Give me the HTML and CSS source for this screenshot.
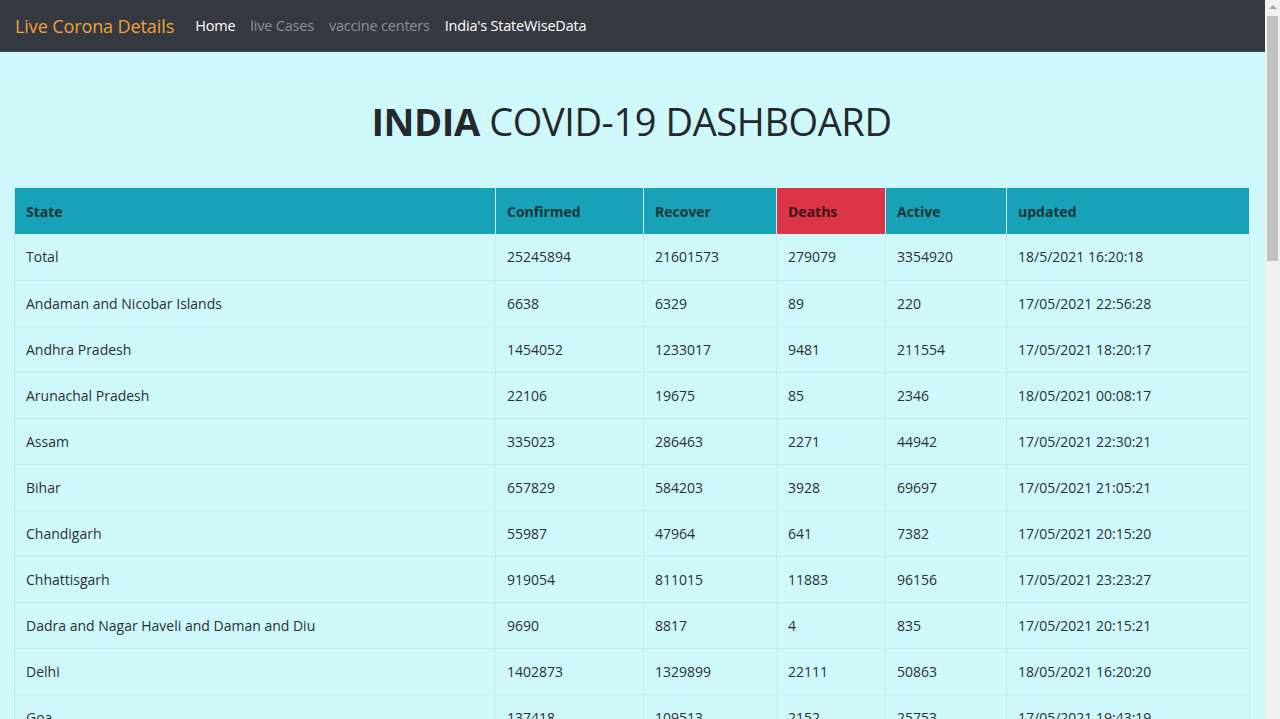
FILE: index.html
```html
<!DOCTYPE html>
<html lang="en">
<head>
<meta charset="utf-8">
<title>Live Corona Details</title>
<link rel="stylesheet" href="styles.css">
</head>
<body>
<nav class="navbar">
  <a class="brand" href="#">Live Corona Details</a>
  <ul class="nav">
    <li><a class="nav-link active" href="#">Home</a></li>
    <li><a class="nav-link muted" href="#">live Cases</a></li>
    <li><a class="nav-link muted" href="#">vaccine centers</a></li>
    <li><a class="nav-link active" href="#">India's StateWiseData</a></li>
  </ul>
</nav>
<main class="container">
  <h1 class="title"><strong>INDIA</strong> COVID-19 DASHBOARD</h1>
  <table class="data">
    <colgroup>
      <col class="c-state"><col class="c-conf"><col class="c-rec"><col class="c-death"><col class="c-act"><col class="c-upd">
    </colgroup>
    <thead>
      <tr>
        <th>State</th><th>Confirmed</th><th>Recover</th><th class="danger">Deaths</th><th>Active</th><th>updated</th>
      </tr>
    </thead>
    <tbody>
      <tr><td>Total</td><td>25245894</td><td>21601573</td><td>279079</td><td>3354920</td><td>18/5/2021 16:20:18</td></tr>
      <tr><td>Andaman and Nicobar Islands</td><td>6638</td><td>6329</td><td>89</td><td>220</td><td>17/05/2021 22:56:28</td></tr>
      <tr><td>Andhra Pradesh</td><td>1454052</td><td>1233017</td><td>9481</td><td>211554</td><td>17/05/2021 18:20:17</td></tr>
      <tr><td>Arunachal Pradesh</td><td>22106</td><td>19675</td><td>85</td><td>2346</td><td>18/05/2021 00:08:17</td></tr>
      <tr><td>Assam</td><td>335023</td><td>286463</td><td>2271</td><td>44942</td><td>17/05/2021 22:30:21</td></tr>
      <tr><td>Bihar</td><td>657829</td><td>584203</td><td>3928</td><td>69697</td><td>17/05/2021 21:05:21</td></tr>
      <tr><td>Chandigarh</td><td>55987</td><td>47964</td><td>641</td><td>7382</td><td>17/05/2021 20:15:20</td></tr>
      <tr><td>Chhattisgarh</td><td>919054</td><td>811015</td><td>11883</td><td>96156</td><td>17/05/2021 23:23:27</td></tr>
      <tr><td>Dadra and Nagar Haveli and Daman and Diu</td><td>9690</td><td>8817</td><td>4</td><td>835</td><td>17/05/2021 20:15:21</td></tr>
      <tr><td>Delhi</td><td>1402873</td><td>1329899</td><td>22111</td><td>50863</td><td>18/05/2021 16:20:20</td></tr>
      <tr><td>Goa</td><td>137418</td><td>109513</td><td>2152</td><td>25753</td><td>17/05/2021 19:43:19</td></tr>
    </tbody>
  </table>
</main>
<div class="fake-scrollbar" aria-hidden="true">
  <span class="arrow"></span>
  <span class="thumb"></span>
</div>
</body>
</html>
```
FILE: styles.css
```css
* { box-sizing: border-box; }
html, body { margin: 0; padding: 0; }
body {
  background: #cff8fb;
  color: #212529;
  font-family: "Open Sans", "Noto Sans", Arial, sans-serif;
  font-size: 14px;
  width: 1265px;
}
a { text-decoration: none; }

.navbar {
  height: 52px;
  background: #343a40;
  display: flex;
  align-items: center;
  padding: 0 15px;
  border-bottom: 1px solid #3d4a4c;
}
.brand {
  color: #f0a33a;
  font-size: 18px;
  margin-right: 21px;
  letter-spacing: -0.1px;
}
.nav {
  display: flex;
  list-style: none;
  margin: 0;
  padding: 0;
  gap: 15px;
}
.nav-link {
  font-size: 14.5px;
  color: #ffffff;
  letter-spacing: -0.2px;
}
.nav-link.muted { color: #8d9194; }

.container { padding: 0 16px 0 14px; }
.title {
  margin: 46px 0 44px;
  text-align: center;
  font-size: 38px;
  font-weight: 400;
  line-height: 46px;
  color: #23282d;
  letter-spacing: -0.4px;
}
.title strong { font-weight: 700; }

.data {
  width: 1235px;
  border-collapse: collapse;
  table-layout: fixed;
  border-left: 1px solid #bfe6ea;
}
.c-state { width: 481px; }
.c-conf { width: 148px; }
.c-rec { width: 133px; }
.c-death { width: 109px; }
.c-act { width: 121px; }
.c-upd { width: 243px; }

.data th, .data td {
  text-align: left;
  padding: 0 11px;
  white-space: nowrap;
  border-right: 1px solid #c3ebee;
}
.data th {
  background: #17a2b8;
  height: 46px;
  font-weight: 700;
  color: #17343a;
  border-right: 1px solid #c8f0f4;
}
.data th.danger { background: #dc3545; color: #3a1418; }
.data td {
  height: 46px;
  border-bottom: 1px solid #c3ebee;
  color: #2b3033;
}

.fake-scrollbar {
  position: fixed;
  top: 0;
  right: 0;
  width: 15px;
  height: 100vh;
  background: #f1f1f1;
}
.fake-scrollbar .arrow {
  position: absolute;
  top: 5px;
  left: 4px;
  width: 0;
  height: 0;
  border-left: 4px solid transparent;
  border-right: 4px solid transparent;
  border-bottom: 4px solid #a3a3a3;
}
.fake-scrollbar .thumb {
  position: absolute;
  top: 16px;
  left: 2px;
  width: 11px;
  height: 245px;
  background: #c1c1c1;
}
```
